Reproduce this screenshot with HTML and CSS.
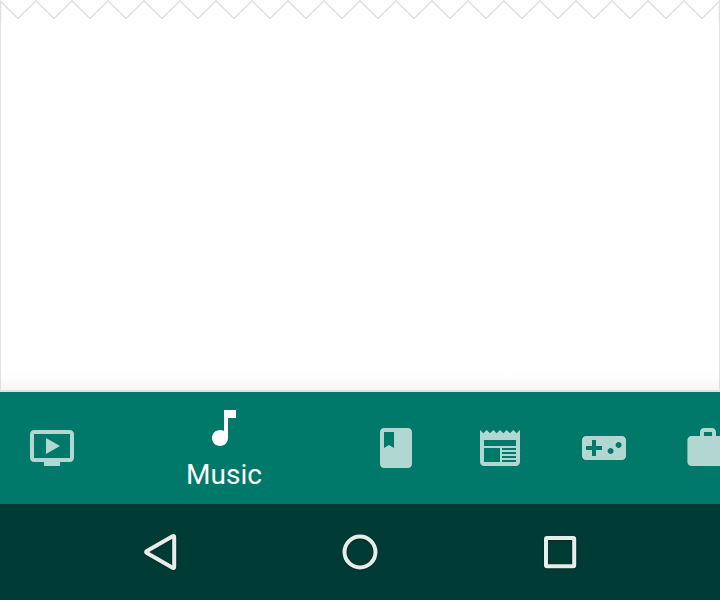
FILE: index.html
```
<!DOCTYPE html>
<html lang="en">
<head>
<meta charset="utf-8">
<title>Bottom navigation</title>
<link rel="stylesheet" href="styles.css">
</head>
<body>
<div class="screen">
  <main class="content">
    <svg class="torn-edge" viewBox="0 0 720 22"><path d="M.5 22V1L18 18.500 36 .8 54 18.500 72 .8 90 18.500 108 .8 126 18.500 144 .8 162 18.500 180 .8 198 18.500 216 .8 234 18.500 252 .8 270 18.500 288 .8 306 18.500 324 .8 342 18.500 360 .8 378 18.500 396 .8 414 18.500 432 .8 450 18.500 468 .8 486 18.500 504 .8 522 18.500 540 .8 558 18.500 576 .8 594 18.500 612 .8 630 18.500 648 .8 666 18.500 684 .8 702 18.500 719.500 1V22"/></svg>
  </main>
  <nav class="tabs">
    <a class="tab tab-video"><svg class="icon" viewBox="0 0 24 24"><path d="M21 3H3c-1.11 0-2 .89-2 2v12c0 1.1.89 2 2 2h5v2h8v-2h5c1.1 0 2-.9 2-2V5c0-1.1-.9-2-2-2zm0 14H3V5h18v12zm-5-6l-7 4V7z"/></svg></a>
    <a class="tab tab-active"><svg class="icon" viewBox="0 0 24 24"><path d="M12 3v10.55c-.59-.34-1.27-.55-2-.55-2.21 0-4 1.79-4 4s1.79 4 4 4 4-1.79 4-4V7h4V3z"/></svg><span class="label">Music</span></a>
    <a class="tab tab-book"><svg class="icon" viewBox="0 0 24 24"><path d="M18 2H6c-1.1 0-2 .9-2 2v16c0 1.1.9 2 2 2h12c1.1 0 2-.9 2-2V4c0-1.1-.9-2-2-2zM6 4h5v8l-2.5-1.5L6 12V4z"/></svg></a>
    <a class="tab tab-news"><svg class="icon" viewBox="0 0 24 24"><path fill-rule="evenodd" d="M22 3l-1.67 1.67L18.67 3 17 4.67 15.33 3l-1.66 1.67L12 3l-1.67 1.67L8.67 3 7 4.67 5.33 3 3.67 4.67 2 3v16c0 1.1.9 2 2 2h16c1.1 0 2-.9 2-2V3zM4 8h16v3H4zM4 12h8v7H4zM13 12h7v1h-7zM13 14h7v1h-7zM13 16h7v1h-7zM13 18h7v1h-7z"/></svg></a>
    <a class="tab tab-games"><svg class="icon" viewBox="0 0 24 24"><path d="M21 6H3c-1.1 0-2 .9-2 2v8c0 1.1.9 2 2 2h18c1.1 0 2-.9 2-2V8c0-1.1-.9-2-2-2zm-10 7H8v3H6v-3H3v-2h3V8h2v3h3v2zm4.3 2c-.83 0-1.5-.67-1.5-1.5s.67-1.5 1.5-1.5 1.5.67 1.5 1.5-.67 1.5-1.5 1.5zm4-3c-.83 0-1.5-.67-1.5-1.5s.67-1.5 1.5-1.5 1.5.67 1.5 1.5-.67 1.5-1.5 1.5z"/></svg></a>
    <a class="tab tab-work"><svg class="icon" viewBox="0 0 24 24"><path d="M20 6h-4V4c0-1.11-.89-2-2-2h-4c-1.11 0-2 .89-2 2v2H3.7c-1.11 0-2 .89-2 2v11c0 1.11.89 2 2 2H20c1.11 0 2-.89 2-2V8c0-1.11-.89-2-2-2zm-6 0h-4V4h4v2z"/></svg></a>
  </nav>
  <footer class="system-bar">
    <svg class="key" viewBox="0 0 48 48"><path d="M36.600 8.300Q38.200 7.400 38.200 9V39Q38.200 40.600 36.600 39.700L10.900 25Q9.300 24 10.900 23z"/></svg>
    <svg class="key" viewBox="0 0 48 48"><circle cx="24" cy="24" r="15.500"/></svg>
    <svg class="key" viewBox="0 0 48 48"><rect x="10" y="10" width="28.200" height="28.200" rx="1"/></svg>
  </footer>
</div>
</body>
</html>
```
FILE: styles.css
```
* { box-sizing: border-box; }
body { margin: 0; background: #fff; font-family: Roboto, sans-serif; }
.screen { width: 720px; height: 600px; display: flex; flex-direction: column; overflow: hidden; }
.content {
  height: 392px;
  background:
    linear-gradient(#e0e0e0, #e0e0e0) 0 22px / 1px 100% no-repeat,
    linear-gradient(#e0e0e0, #e0e0e0) 100% 22px / 1px 100% no-repeat,
    linear-gradient(#fff 0 372px, #fbfbfb 381px, #f5f5f5 390px, #e2e2e2 390px 392px);
}
.torn-edge { display: block; width: 720px; height: 22px; fill: none; stroke: #e0e0e0; stroke-width: 1.5; }
.tabs { height: 112px; display: flex; background: #00796b; overflow: hidden; }
.tab { flex: none; width: 104px; display: flex; flex-direction: column; align-items: center; padding-top: 32px; fill: #b2d7d3; }
.tab-active { width: 240px; padding-top: 12px; fill: #fff; }
.icon { display: block; flex: none; width: 48px; height: 48px; }
.label { color: #fff; font-size: 28px; line-height: 34px; margin-top: 6px; }
.system-bar { height: 96px; display: flex; justify-content: center; align-items: center; gap: 152px; background: #003c35; }
.key { width: 48px; height: 48px; fill: none; stroke: #e8eceb; stroke-width: 4; stroke-linejoin: round; filter: drop-shadow(0 1px 1px rgba(0, 0, 0, .3)); }
```
